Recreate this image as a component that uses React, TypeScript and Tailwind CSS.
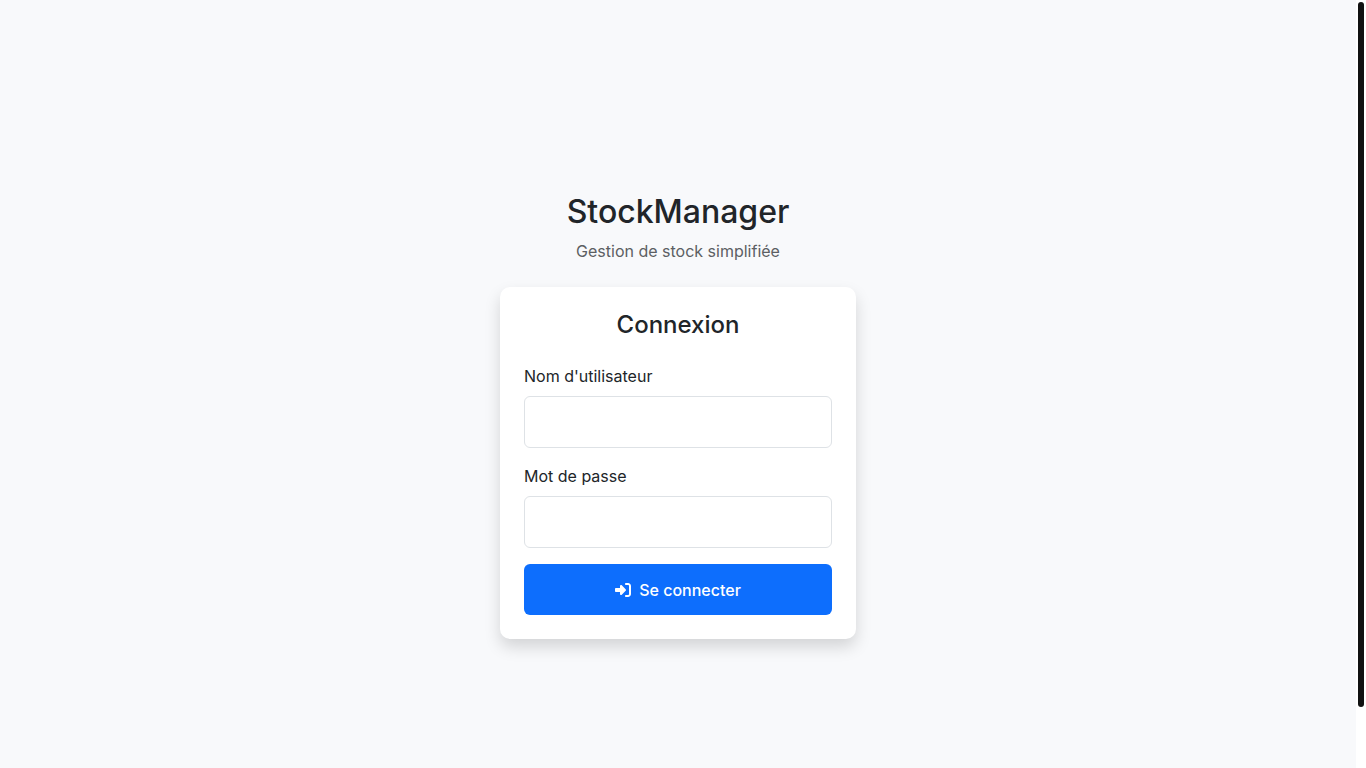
import React, { useEffect, useRef, useState } from 'react';
import { FaRightToBracket } from 'react-icons/fa6';

const fields = [
  { id: 'username', label: "Nom d'utilisateur", type: 'text', autoComplete: 'username' },
  { id: 'password', label: 'Mot de passe', type: 'password', autoComplete: 'current-password' }
];

const LoginForm = () => {
  const [values, setValues] = useState<Record<string, string>>({ username: '', password: '' });

  return (
    <form onSubmit={(e) => e.preventDefault()}>
      {fields.map((field) => (
        <div key={field.id} className="mb-4">
          <label htmlFor={field.id} className="block mb-2">
            {field.label}
          </label>
          <input
            id={field.id}
            name={field.id}
            type={field.type}
            autoComplete={field.autoComplete}
            value={values[field.id]}
            onChange={(e) => setValues({ ...values, [field.id]: e.target.value })}
            className="block w-full h-[52px] px-4 bg-white border border-[#dee2e6] rounded-md outline-none focus:border-[#86b7fe]"
          />
        </div>
      ))}

      <button
        type="submit"
        className="flex items-center justify-center gap-2 w-full h-[51px] bg-[#0d6efd] hover:bg-[#0b5ed7] text-white font-medium rounded-md cursor-pointer"
      >
        <FaRightToBracket className="w-4 h-4" aria-hidden="true" />
        Se connecter
      </button>
    </form>
  );
};

const App = () => {
  const scroller = useRef<HTMLDivElement>(null);
  const [thumb, setThumb] = useState({ top: 0, height: 100 });

  // Keep the thumb in step with the scrolled content
  const updateThumb = () => {
    const el = scroller.current;
    if (!el) return;
    setThumb({
      top: (el.scrollTop / el.scrollHeight) * 100,
      height: (el.clientHeight / el.scrollHeight) * 100
    });
  };

  useEffect(() => {
    updateThumb();
    window.addEventListener('resize', updateThumb);
    return () => window.removeEventListener('resize', updateThumb);
  }, []);

  return (
    <div className="flex h-screen bg-white font-['Inter',sans-serif] text-base text-[#212529] antialiased">
      <div
        ref={scroller}
        onScroll={updateThumb}
        className="flex-1 overflow-y-auto [scrollbar-width:none]"
      >
        <main className="box-content min-h-screen py-8 flex items-center justify-center bg-[#f8f9fb]">
          <div className="w-full max-w-[356px]">
            {/* Brand */}
            <div className="text-center mb-6">
              <h1 className="text-[32px] leading-[38px] font-medium mb-2">StockManager</h1>
              <p className="text-[#5c5f63]">Gestion de stock simplifiée</p>
            </div>

            {/* Login card */}
            <div className="bg-white rounded-[10px] p-6 shadow-[0_8px_16px_rgba(0,0,0,0.15)]">
              <h2 className="text-2xl leading-[28px] font-medium text-center mb-[25px]">Connexion</h2>
              <LoginForm />
            </div>
          </div>
        </main>
      </div>

      {/* Scrollbar */}
      <div className="w-[10px] h-full bg-white" aria-hidden="true">
        <div style={{ height: `${thumb.top}%` }} />
        <div className="p-[2px]" style={{ height: `${thumb.height}%` }}>
          <div className="h-full bg-[#111111] rounded-full" />
        </div>
      </div>
    </div>
  );
};

export default App;
